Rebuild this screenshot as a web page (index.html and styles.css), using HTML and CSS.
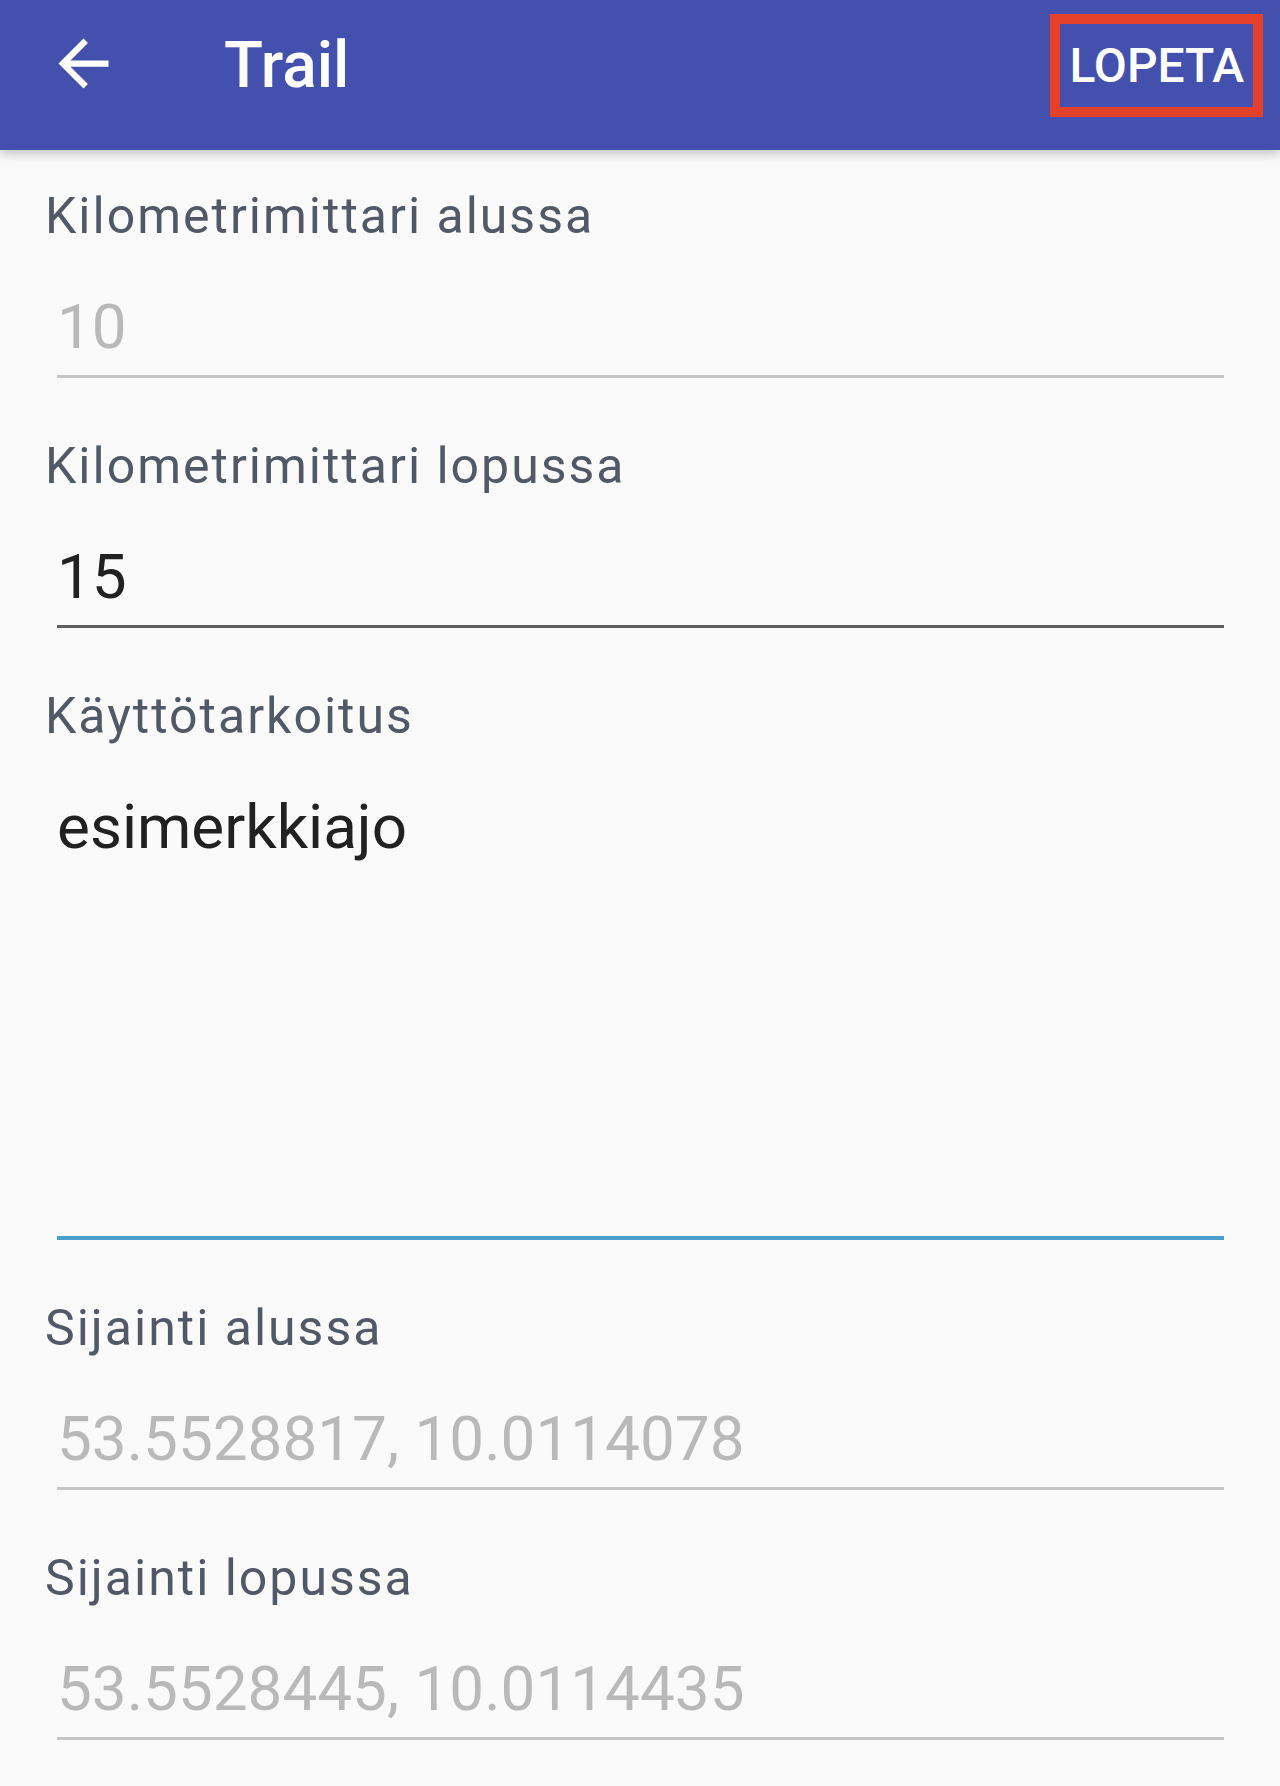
FILE: index.html
```html
<!DOCTYPE html>
<html>
	<head>
		<title>Trail</title>
		<link rel="stylesheet" href="styles.css">
	</head>
	<body>
		<div class="toolbar">
			<a href="#" class="backButton">
				<svg viewBox="0 0 24 24" width="75" height="75">
					<path d="M20 11H7.83l5.59-5.59L12 4l-8 8 8 8 1.41-1.41L7.83 13H20v-2z" fill="#ffffff"/>
				</svg>
			</a>
			<h1 class="title">Trail</h1>
			<a href="#" class="stopButton">LOPETA</a>
		</div>

		<div class="form">
			<div class="field">
				<div class="fieldLabel">Kilometrimittari alussa</div>
				<div class="fieldInput disabled">10</div>
			</div>
			<div class="field">
				<div class="fieldLabel">Kilometrimittari lopussa</div>
				<div class="fieldInput">15</div>
			</div>
			<div class="field">
				<div class="fieldLabel">Käyttötarkoitus</div>
				<div class="fieldInput multiline focused">esimerkkiajo</div>
			</div>
			<div class="field">
				<div class="fieldLabel">Sijainti alussa</div>
				<div class="fieldInput disabled">53.5528817, 10.0114078</div>
			</div>
			<div class="field">
				<div class="fieldLabel">Sijainti lopussa</div>
				<div class="fieldInput disabled">53.5528445, 10.0114435</div>
			</div>
		</div>
	</body>
</html>
```

FILE: styles.css
```css
body {
	margin: 0;
	background-color: #fafafa;
	font-family: Roboto, "Liberation Sans", sans-serif;
}
.toolbar {
	display: flex;
	align-items: center;
	height: 130px;
	padding: 0 17px 20px 46px;
	background-color: #4350ae;
	box-shadow: 0 4px 10px rgba(0, 0, 0, 0.22);
}
.backButton {
	display: flex;
	width: 75px;
	height: 75px;
	margin-top: -4px;
}
.title {
	flex: 1;
	margin: 0 0 0 103px;
	color: #ffffff;
	font-size: 64px;
	font-weight: 500;
	line-height: 75px;
}
.stopButton {
	display: block;
	height: 83px;
	padding: 0 9px;
	border: 10px solid #e5402a;
	color: #ffffff;
	text-decoration: none;
	font-size: 48px;
	font-weight: 500;
	line-height: 83px;
}
.form {
	padding: 37px 56px 0 45px;
}
.field {
	margin-bottom: 59px;
}
.fieldLabel {
	color: #515866;
	font-size: 50px;
	line-height: 59px;
	letter-spacing: 2px;
}
.fieldInput {
	margin: 44px 0 0 12px;
	padding-bottom: 12px;
	border-bottom: 3px solid #5e5e5e;
	color: #212121;
	font-size: 62px;
	line-height: 73px;
}
.disabled {
	color: #b9b9b9;
	border-bottom-color: #c6c6c6;
}
.multiline {
	height: 434px;
}
.focused {
	border-bottom: 4px solid #4b9fcc;
}
```
